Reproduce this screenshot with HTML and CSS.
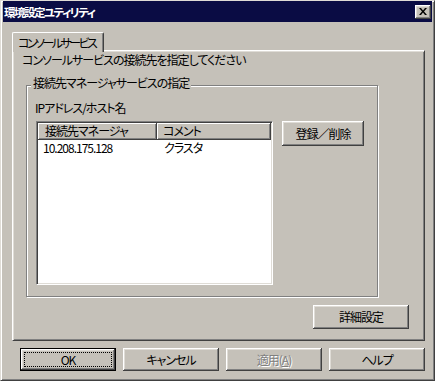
FILE: index.html
```html
<!DOCTYPE html>
<html lang="ja">

<head>
  <meta charset="UTF-8">
  <title>環境設定ユティリティ</title>
  <link rel="stylesheet" href="styles.css">
</head>

<body>
  <div class="window">
    <div class="titlebar">
      <span class="title">環境設定ユティリティ</span>
      <button class="close-btn" aria-label="閉じる">
        <svg width="8" height="7" viewBox="0 0 8 7">
          <path d="M0 0h2l2 2.4L6 0h2L5 3.5 8 7H6L4 4.6 2 7H0l3-3.5z" fill="#000" />
        </svg>
      </button>
    </div>

    <div class="dialog-body">
      <div class="tabs">
        <div class="tab active">コンソールサービス</div>
      </div>

      <div class="tab-panel">
        <p class="hint">コンソールサービスの接続先を指定してください</p>

        <div class="group">
          <span class="group-title">接続先マネージャサービスの指定</span>
          <div class="field-label">IPアドレス/ホスト名</div>
          <div class="list-row">
            <div class="listview">
              <div class="lv-header">
                <div class="lv-col col-1">接続先マネージャ</div>
                <div class="lv-col col-2">コメント</div>
              </div>
              <div class="lv-item">
                <div class="lv-cell col-1">10.208.175.128</div>
                <div class="lv-cell col-2">クラスタ</div>
              </div>
            </div>
            <button class="btn btn-register">登録／削除</button>
          </div>
        </div>

        <div class="panel-actions">
          <button class="btn btn-detail">詳細設定</button>
        </div>
      </div>

      <div class="dialog-buttons">
        <button class="btn btn-default"><span class="focus-ring">OK</span></button>
        <button class="btn">キャンセル</button>
        <button class="btn" disabled>適用(<u>A</u>)</button>
        <button class="btn">ヘルプ</button>
      </div>
    </div>
  </div>
</body>

</html>
```

FILE: styles.css
```css
:root {
  --face: #c5c1b9;
  --light: #dfdcd6;
  --shadow: #808080;
  --dark: #404040;
  --white: #FFFFFF;
  --title-bg: #0a0c44;
}

* {
  margin: 0;
  padding: 0;
  box-sizing: border-box;
}

body {
  background: var(--face);
  font-family: "Noto Sans CJK JP", "Noto Sans", sans-serif;
  font-size: 12px;
  font-feature-settings: "palt";
  letter-spacing: -1px;
  color: #000;
}

.window {
  width: 435px;
  height: 381px;
  display: flex;
  flex-direction: column;
  background: var(--face);
  border: 1px solid;
  border-color: var(--light) var(--dark) var(--dark) var(--light);
  padding: 0 2px 2px;
  box-shadow: inset 1px 1px var(--white), inset -1px -1px var(--shadow);
}

/* title bar */
.titlebar {
  height: 21px;
  display: flex;
  align-items: center;
  justify-content: space-between;
  background: var(--title-bg);
  padding-left: 1px;
}

.title {
  color: var(--white);
  font-size: 11.5px;
  font-weight: 700;
  line-height: 16px;
  letter-spacing: -1.5px;
}

.close-btn {
  width: 16px;
  height: 14px;
  margin-right: 1px;
  border: 0;
  display: flex;
  align-items: center;
  justify-content: center;
  background: var(--face);
  box-shadow: inset -1px -1px var(--dark), inset 1px 1px var(--white),
    inset -2px -2px var(--shadow), inset 2px 2px var(--light);
}

/* tabs */
.dialog-body {
  flex: 1;
  display: flex;
  flex-direction: column;
  padding: 10px 7px 0 9px;
}

.tabs {
  display: flex;
}

.tab {
  position: relative;
  z-index: 1;
  width: 92px;
  height: 20px;
  margin-bottom: -2px;
  padding: 1px 0 0 5px;
  line-height: 17px;
  white-space: nowrap;
  letter-spacing: -2.5px;
  background: var(--face);
  border: 1px solid;
  border-color: var(--white) var(--dark) transparent var(--white);
  border-bottom: 0;
  border-radius: 2px 2px 0 0;
  box-shadow: inset -1px 0 var(--shadow);
}

.tab-panel {
  height: 291px;
  border: 1px solid;
  border-color: var(--white) var(--dark) var(--dark) var(--white);
  box-shadow: inset 1px 1px var(--light), inset -1px -1px var(--shadow);
  padding: 1px 0 0 9px;
  display: flex;
  flex-direction: column;
}

.hint {
  line-height: 16px;
}

/* group box */
.group {
  width: 352px;
  margin: 17px 0 0 4px;
  padding: 0 0 11px 9px;
  border: 1px solid var(--shadow);
  box-shadow: inset 1px 1px var(--white), 1px 1px var(--white);
  display: flex;
  flex-direction: column;
  align-items: flex-start;
}

.group-title {
  margin: -10px 0 0 -5px;
  padding: 0 2px;
  line-height: 14px;
  background: var(--face);
}

.field-label {
  margin: 10px 0 0 -1px;
  line-height: 16px;
}

.list-row {
  display: flex;
  align-items: flex-start;
  margin-top: 5px;
}

/* list view */
.listview {
  width: 237px;
  height: 164px;
  padding: 1px;
  background: var(--white);
  border: 1px solid;
  border-color: var(--shadow) var(--white) var(--white) var(--shadow);
  box-shadow: inset 1px 1px var(--dark), inset -1px -1px var(--light);
}

.lv-header,
.lv-item {
  display: flex;
}

.lv-col {
  height: 17px;
  line-height: 16px;
  background: var(--face);
  box-shadow: inset -1px -1px var(--dark), inset 1px 1px var(--white),
    inset -2px -2px var(--shadow);
}

.lv-col.col-1 {
  width: 119px;
  padding-left: 7px;
}

.lv-col.col-2 {
  flex: 1;
  padding-left: 6px;
}

.lv-cell {
  line-height: 16px;
}

.lv-cell.col-1 {
  width: 119px;
  padding-left: 5px;
}

.lv-cell.col-2 {
  padding-left: 7px;
}

/* buttons */
.btn {
  font: inherit;
  font-feature-settings: "palt";
  letter-spacing: -1px;
  color: #000;
  border: 0;
  background: var(--face);
  box-shadow: inset -1px -1px var(--dark), inset 1px 1px var(--white),
    inset -2px -2px var(--shadow), inset 2px 2px var(--light);
  width: 96px;
  height: 23px;
  line-height: 16px;
}

.btn:disabled {
  color: var(--shadow);
  text-shadow: 1px 1px var(--white);
}

.btn-register {
  width: 82px;
  height: 25px;
  margin-left: 9px;
}

.panel-actions {
  display: flex;
  justify-content: flex-end;
  margin: 8px 15px 0 0;
}

.btn-detail {
  height: 24px;
}

.dialog-buttons {
  display: flex;
  gap: 7px;
  margin-top: 7px;
  padding-left: 8px;
}

.btn-default {
  display: flex;
  padding: 3px;
  border: 1px solid #000;
}

.focus-ring {
  flex: 1;
  display: flex;
  align-items: center;
  justify-content: center;
  border: 1px dotted #000;
}
```
